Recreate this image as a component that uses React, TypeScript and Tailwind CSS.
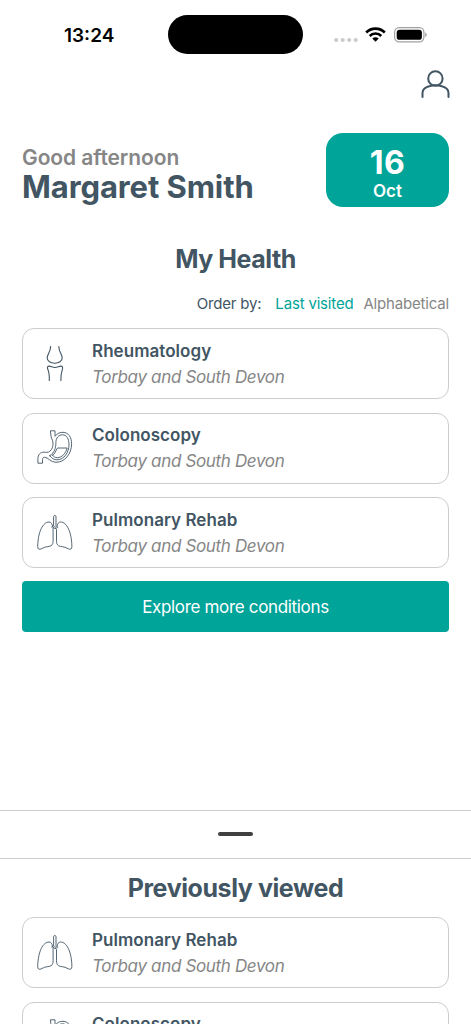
import type { ReactNode } from "react";

type Condition = {
	name: string;
	trust: string;
	icon: ReactNode;
};

const iconProps = {
	viewBox: "0 0 36 36",
	fill: "none",
	stroke: "#425563",
	strokeWidth: 1,
	strokeLinecap: "round" as const,
	strokeLinejoin: "round" as const,
	className: "h-9 w-9 shrink-0",
};

const JointIcon = () => (
	<svg {...iconProps} strokeWidth={1.1}>
		<path d="M13.600 .5C13.600 6 10.200 8 10.200 12c0 3.200 3.400 5.200 7.500 5.200s7.500-2 7.500-5.200c0-4-3.400-6-3.400-11.500" />
		<path d="M12.300 34.500c.2-5 .1-7.500-1.500-11.300-.8-1.900-.3-3.100 1.400-3.100 2 0 3.200 1.400 5.800 1.400s3.800-1.400 5.800-1.400c1.700 0 2.200 1.200 1.600 3.100-1.200 3.800-1.700 6.300-1.500 11.300" />
	</svg>
);

const StomachIcon = () => (
	<svg {...iconProps} strokeWidth={0.9}>
		<path d="M13.800 .8H18V6.300C20 3.500 23 2.200 26 2.300c5.500.2 8.600 5 8.600 11.400 0 10.500-7 18.600-15.600 18.600-5.500 0-8-5.100-11.300-5.100-1.500 0-2.200 1-2.200 2.500v3.500H.9v-4.500c0-4 2.300-6.500 6-6.500 2.500 0 4 .7 6-1 2.200-2 3.300-4.500 3.100-8-.1-4-2.200-4.500-2.200-8.500z" />
		<path d="M12.800 25.800c2.500 2.700 4.200 4 7.200 4 7 0 12-7.300 12-15.300 0-5.500-2.200-9.700-6.500-9.700-3.800 0-6.600 3-6.600 7.700 0 6-1.500 10-6.100 13.300z" />
		<path d="M15.500 25.200c3-1.500 3-4.700 5-7.200h9.700c-1.500 5.200-5.200 9.700-10 9.700-2 0-3.500-1-4.700-2.500z" />
	</svg>
);

const LungsIcon = () => (
	<svg {...iconProps} strokeWidth={0.9}>
		<path d="M16.600 10.500V1.600c0-1.400 2.400-1.400 2.400 0v8.900l1.700 1.800-.9.900-2-1.700-2 1.700-.9-.9z" />
		<path d="M15.600 11.400C15.200 8.700 14 7 12 7 6 7 1 16.500.7 31.500c0 2.700 1.600 3.400 3.600 2.300 4.700-2.800 7.500-1.700 9.800-3.100 1.500-1 2-2.500 2-5V14.300c0-1.300 3.400-1.300 3.400 0v11.400c0 2.500.5 4 2 5 2.300 1.400 5.100.3 9.800 3.100 2 1.100 3.600.4 3.600-2.300C34.600 16.500 29.600 7 23.600 7c-2 0-3.200 1.700-3.600 4.400" />
	</svg>
);

const trust = "Torbay and South Devon";

const rheumatology: Condition = { name: "Rheumatology", trust, icon: <JointIcon /> };
const colonoscopy: Condition = { name: "Colonoscopy", trust, icon: <StomachIcon /> };
const pulmonary: Condition = { name: "Pulmonary Rehab", trust, icon: <LungsIcon /> };

const ConditionCard = ({ condition }: { condition: Condition }) => (
	<button
		type="button"
		className="flex h-[71px] w-full shrink-0 items-center rounded-[12px] border border-[#cccccc] bg-white pl-[14px] text-left"
	>
		{condition.icon}
		<span className="ml-[19px] flex flex-col text-[17px] leading-[26px]">
			<span className="font-semibold tracking-[0.05px] text-[#425563]">{condition.name}</span>
			<span className="tracking-[-0.34px] text-[#868686] italic">{condition.trust}</span>
		</span>
	</button>
);

const StatusBar = () => (
	<div className="flex h-[69px] shrink-0 items-start pt-[15px]">
		<span className="w-[168px] pl-[64px] text-[19px] leading-[41px] font-semibold text-black">
			13:24
		</span>
		<div className="h-[39px] w-[135px] rounded-full bg-black" />
		<div className="ml-[31px] flex h-[39px] items-center">
			<svg width="24" height="6" viewBox="0 0 24 6" fill="#cbcbcb" className="mt-[11px]">
				<circle cx="2.200" cy="3" r="2.100" />
				<circle cx="8.700" cy="3" r="2.100" />
				<circle cx="15.200" cy="3" r="2.100" />
				<circle cx="21.700" cy="3" r="2.100" />
			</svg>
			<svg width="21" height="15" viewBox="0 0 21 15" className="ml-[7px]">
				<g fill="none" stroke="#000" strokeWidth="2.600">
					<path d="M1.200 5.500C6.200.3 14.800.3 19.800 5.500" />
					<path d="M4.700 9C8 5.700 13 5.700 16.300 9" />
				</g>
				<path d="M7.300 11.500c1.800-1.700 4.600-1.700 6.400 0l-3.200 3.200z" />
			</svg>
			<svg width="34" height="16" viewBox="0 0 34 16" className="ml-[8px]">
				<rect x=".6" y=".6" width="29.300" height="14.300" rx="4.600" fill="none" stroke="#a0a0a0" strokeWidth="1.200" />
				<rect x="2.700" y="2.700" width="25.200" height="10.100" rx="2.900" />
				<path d="M31.200 5.500c2 .7 2 3.800 0 4.500z" fill="#a0a0a0" />
			</svg>
		</div>
	</div>
);

export default function App() {
	return (
		<div className="flex h-[1024px] w-[471px] flex-col overflow-hidden bg-white font-['Inter',sans-serif]">
			<StatusBar />

			<div className="flex h-[64px] shrink-0 justify-end pr-[21px]">
				<svg width="30" height="30" viewBox="0 0 30 30" fill="none" stroke="#425563" strokeWidth="2" strokeLinecap="round">
					<circle cx="15.400" cy="9.500" r="7.200" />
					<path d="M2.500 28v-4c0-4.500 3-6.200 8.500-7.200 2.500-.5 6.500-.5 9 0 5.500 1 8.500 2.700 8.500 7.200v4" />
				</svg>
			</div>

			<header className="flex h-[74px] shrink-0 items-center justify-between px-[22px]">
				<div className="pt-[7px]">
					<p className="text-[21px] leading-[27px] font-semibold tracking-[-0.1px] text-[#868686]">Good afternoon</p>
					<h1 className="text-[31px] leading-[32px] font-bold tracking-[-0.1px] text-[#425563]">Margaret Smith</h1>
				</div>
				<div className="flex h-[74px] w-[123px] flex-col items-center rounded-[17px] bg-[#00a499] pt-[12px] text-white">
					<span className="text-[32px] leading-[36px] font-bold tracking-[0.5px]">16</span>
					<span className="text-[17px] leading-[20px] font-semibold">Oct</span>
				</div>
			</header>

			{/* My Health */}
			<main className="flex h-[603px] shrink-0 flex-col px-[22px] pt-[36px]">
				<h2 className="text-center text-[25px] leading-[32px] font-bold tracking-[-0.45px] text-[#425563]">My Health</h2>
				<div className="mt-[19px] flex h-[20px] justify-end text-[15px] leading-[20px] tracking-[-0.18px]">
					<span className="text-[#425563]">Order by:</span>
					<button type="button" className="ml-[14px] text-[#00a499]">Last visited</button>
					<button type="button" className="ml-[10px] text-[#868686]">Alphabetical</button>
				</div>
				<div className="mt-[14px] flex flex-col gap-[13.500px]">
					{[rheumatology, colonoscopy, pulmonary].map((condition) => (
						<ConditionCard key={condition.name} condition={condition} />
					))}
					<button type="button" className="-mt-[0.5px] h-[51px] rounded-[4px] bg-[#00a499] pt-[2px] text-[17px] tracking-[-0.33px] text-white">
						Explore more conditions
					</button>
				</div>
			</main>

			{/* Bottom sheet */}
			<section className="flex flex-1 flex-col border-t border-[#cccccc]">
				<div className="flex h-[48px] shrink-0 items-center justify-center border-b border-[#cccccc] pb-[1px]">
					<div className="h-[4px] w-[35px] rounded-full bg-[#404040]" />
				</div>
				<div className="flex flex-col px-[22px] pt-[13px]">
					<h2 className="text-center text-[25px] leading-[32px] font-bold tracking-[-0.42px] text-[#425563]">Previously viewed</h2>
					<div className="mt-[13px] flex flex-col gap-[13.500px]">
						<ConditionCard condition={pulmonary} />
						<ConditionCard condition={colonoscopy} />
					</div>
				</div>
			</section>
		</div>
	);
}
